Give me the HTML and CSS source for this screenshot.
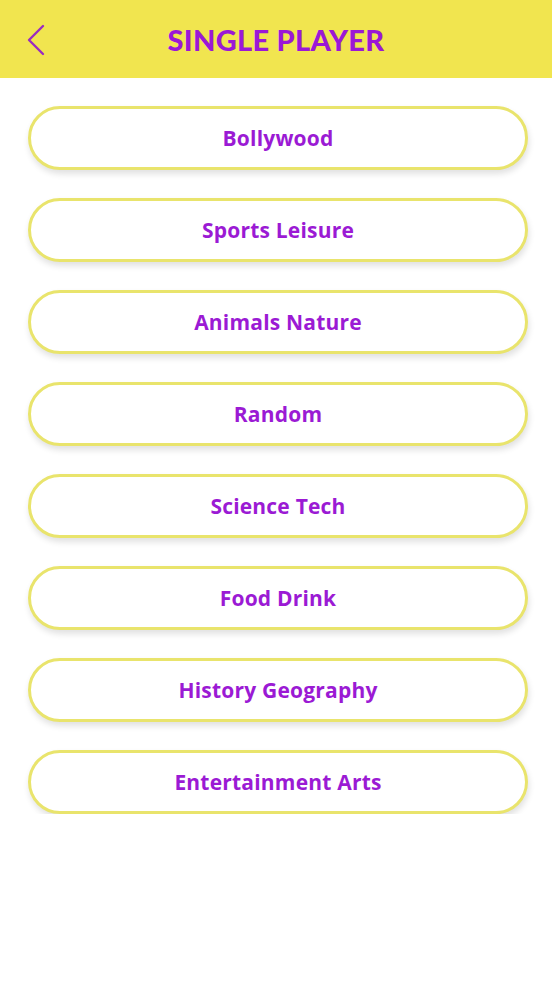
FILE: index.html
```html
<!DOCTYPE html>
<html lang="en">
<head>
  <meta charset="UTF-8">
  <meta name="viewport" content="width=device-width, initial-scale=1.0">
  <title>Single Player</title>
  <link rel="stylesheet" href="styles.css">
</head>
<body>
  <header class="topbar">
    <button class="back" aria-label="Back">
      <svg width="20" height="34" viewBox="0 0 20 34">
        <path d="M17 3 L3 17 L17 31" fill="none" stroke="#9b2bc0" stroke-width="2.4" stroke-linecap="round" stroke-linejoin="round"/>
      </svg>
    </button>
    <h1>SINGLE PLAYER</h1>
  </header>

  <main class="categories">
    <button class="category">Bollywood</button>
    <button class="category">Sports Leisure</button>
    <button class="category">Animals Nature</button>
    <button class="category">Random</button>
    <button class="category">Science Tech</button>
    <button class="category">Food Drink</button>
    <button class="category">History Geography</button>
    <button class="category">Entertainment Arts</button>
  </main>
</body>
</html>
```

FILE: styles.css
```css
/* Single player screen */
body {
  margin: 0;
  background: #fff;
  font-family: "Open Sans", "Noto Sans", sans-serif;
}
.topbar {
  position: relative;
  height: 78px;
  background-color: #f1e54f;
  display: flex;
  align-items: center;
  justify-content: center;
}
.topbar h1 {
  margin: 0;
  font-family: Lato, sans-serif;
  font-weight: 900;
  font-size: 29px;
  letter-spacing: 0.3px;
  color: #9b18d6;
}
.back {
  position: absolute;
  left: 26px;
  top: 23px;
  padding: 0;
  background: none;
  border: none;
  cursor: pointer;
}
.categories {
  display: flex;
  flex-direction: column;
  gap: 28px;
  padding: 28px 24px 0 28px;
}
.category {
  height: 64px;
  width: 100%;
  border: 3px solid #e9e46c;
  border-radius: 32px;
  background-color: #fff;
  box-shadow: 1px 4px 6px rgba(0, 0, 0, 0.12);
  font-family: "Open Sans", sans-serif;
  font-weight: 700;
  font-size: 21px;
  letter-spacing: 0.2px;
  color: #9b1ad4;
  cursor: pointer;
}
```
